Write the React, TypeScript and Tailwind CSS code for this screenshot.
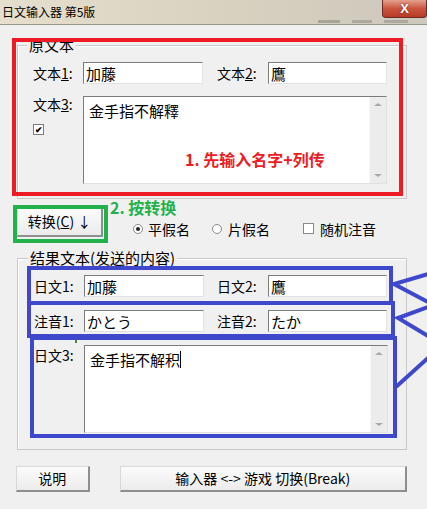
import React from "react";

function Input({ className, text }: { className: string; text: string }) {
  return (
    <div
      className={
        "h-[22px] bg-white border border-t-[#7c7c7c] border-l-[#7c7c7c] border-r-[#e2e2e2] border-b-[#e2e2e2] flex items-center pl-[2px] text-[15px] leading-none " +
        className
      }
    >
      <span>{text}</span>
    </div>
  );
}

function ScrollBar() {
  return (
    <div className="w-[17px] h-full bg-[#ececec] border-l border-[#f7f7f7] flex flex-col justify-between items-center py-[6px]">
      <div className="w-0 h-0 border-l-[4px] border-r-[4px] border-b-[3px] border-l-transparent border-r-transparent border-b-[#a8a8a8]" />
      <div className="w-0 h-0 border-l-[4px] border-r-[4px] border-t-[3px] border-l-transparent border-r-transparent border-t-[#a8a8a8]" />
    </div>
  );
}

function TextArea({ text, caret }: { text: string; caret?: boolean }) {
  return (
    <div className="w-[304px] h-[88px] bg-white border border-t-[#7c7c7c] border-l-[#7c7c7c] border-r-[#e2e2e2] border-b-[#e2e2e2] flex">
      <div className="flex-1 pl-[5px] pt-[5px] text-[15px] leading-[18px] flex items-start">
        <span>{text}</span>
        {caret && <span className="inline-block w-[1px] h-[17px] bg-black" />}
      </div>
      <ScrollBar />
    </div>
  );
}

function Button({ className, children }: { className: string; children: React.ReactNode }) {
  return (
    <div
      className={
        "flex items-center justify-center bg-gradient-to-b from-[#fbfbfb] to-[#ececec] border border-t-[#d8d8d8] border-l-[#d8d8d8] border-r-2 border-b-2 border-r-[#8e8e8e] border-b-[#8e8e8e] text-[14px] " +
        className
      }
    >
      {children}
    </div>
  );
}

function Label({ children, className }: { children: React.ReactNode; className: string }) {
  return <div className={"text-[14px] leading-none " + className}>{children}</div>;
}

export default function App() {
  return (
    <div className="relative w-[427px] h-[509px] overflow-hidden bg-[#f0f0f0] text-black font-['Noto_Sans_CJK_SC','Liberation_Sans',sans-serif]">
      {/* Title bar */}
      <div className="relative h-[25px] bg-gradient-to-r from-[#e6dfce] via-[#d9d2c0] to-[#cdc8bd] border-b border-[#9a968e] flex items-center pl-[2px]">
        <span className="text-[12px] leading-none">日文输入器 第5版</span>
        <div className="absolute left-[318px] top-[20px] flex gap-[12px]">
          <div className="w-[22px] h-[3px] bg-[#8a8880] opacity-60" />
          <div className="w-[20px] h-[3px] bg-[#8a8880] opacity-50" />
          <div className="w-[24px] h-[3px] bg-[#8a8880] opacity-50" />
        </div>
        <div className="absolute right-0 top-0 w-[45px] h-[18px] rounded-b-[4px] border border-t-0 border-[#6d2a22] bg-gradient-to-b from-[#e3a08e] via-[#c9553e] to-[#b83a24] flex items-center justify-center">
          <span className="text-white font-bold text-[13px] leading-none font-['Liberation_Sans',sans-serif] [text-shadow:0_0_2px_#5a1a10]">X</span>
        </div>
      </div>

      {/* Body */}
      <div className="pl-[17px] pr-[20px] flex flex-col">
        {/* Group 1 */}
        <div className="relative mt-[20px] h-[154px] border border-[#c9c9c9] shadow-[inset_1px_1px_0_#ffffff] pt-[16px] pl-[15px]">
          <div className="absolute -top-[10px] left-[9px] bg-[#f0f0f0] px-[2px] text-[15px] leading-[18px]">原文本</div>
          <div className="flex items-center h-[22px]">
            <Label className="w-[50px]">
              文本<span className="underline">1</span>:
            </Label>
            <Input className="w-[120px]" text="加藤" />
            <Label className="w-[51px] ml-[14px]">
              文本<span className="underline">2</span>:
            </Label>
            <Input className="w-[119px]" text="鷹" />
          </div>
          <div className="flex mt-[12px]">
            <div className="w-[50px] flex flex-col">
              <Label className="mt-[1px]">
                文本<span className="underline">3</span>:
              </Label>
              <div className="mt-[13px] w-[11px] h-[11px] bg-white border border-[#7c7c7c] flex items-center justify-center text-[9px] leading-none font-bold">
                ✔
              </div>
            </div>
            <TextArea text="金手指不解釋" />
          </div>
        </div>

        {/* Convert row */}
        <div className="flex items-center mt-[8px] h-[30px]">
          <Button className="w-[86px] h-[30px]">
            <span>
              转换(<span className="underline">C</span>) ↓
            </span>
          </Button>
          <div className="flex items-center mt-[13px] ml-[30px] text-[14px] leading-none">
            <div className="w-[10px] h-[10px] rounded-full bg-white border border-[#8a8a8a] flex items-center justify-center">
              <div className="w-[4px] h-[4px] rounded-full bg-[#222]" />
            </div>
            <span className="ml-[5px]">平假名</span>
            <div className="ml-[22px] w-[10px] h-[10px] rounded-full bg-white border border-[#8a8a8a]" />
            <span className="ml-[6px]">片假名</span>
            <div className="ml-[33px] w-[11px] h-[11px] bg-white border border-[#8a8a8a]" />
            <span className="ml-[6px]">随机注音</span>
          </div>
        </div>

        {/* Group 2 */}
        <div className="relative mt-[21px] h-[192px] border border-[#c9c9c9] shadow-[inset_1px_1px_0_#ffffff] pt-[16px] pl-[16px]">
          <div className="absolute -top-[10px] left-[10px] bg-[#f0f0f0] px-[2px] text-[15px] leading-[18px]">结果文本(发送的内容)</div>
          <div className="flex items-center h-[22px]">
            <Label className="w-[50px]">日文1:</Label>
            <Input className="w-[120px]" text="加藤" />
            <Label className="w-[51px] ml-[13px]">日文2:</Label>
            <Input className="w-[119px]" text="鷹" />
          </div>
          <div className="flex items-center h-[22px] mt-[13px]">
            <Label className="w-[50px]">注音1:</Label>
            <Input className="w-[120px]" text="かとう" />
            <Label className="w-[51px] ml-[13px]">注音2:</Label>
            <Input className="w-[119px]" text="たか" />
          </div>
          <div className="flex mt-[13px]">
            <Label className="w-[50px] mt-[3px]">日文3:</Label>
            <TextArea text="金手指不解积" caret />
          </div>
        </div>

        {/* Bottom buttons */}
        <div className="flex mt-[16px]">
          <Button className="w-[74px] h-[26px] -ml-[1px]">说明</Button>
          <Button className="w-[289px] h-[26px] ml-[30px]">输入器 &lt;-&gt; 游戏 切换(Break)</Button>
        </div>
      </div>

      {/* Annotations */}
      <div className="absolute left-[12px] top-[38px] w-[391px] h-[158px] border-[4px] border-[#ed1c24]" />
      <div className="absolute left-[185px] top-[151px] text-[16px] font-bold text-[#ed1c24] leading-none">1. 先输入名字+列传</div>
      <div className="absolute left-[13px] top-[205px] w-[95px] h-[38px] border-[4px] border-[#22b14c]" />
      <div className="absolute left-[110px] top-[199px] text-[16px] font-bold text-[#22b14c] leading-none">2. 按转换</div>
      <div className="absolute left-[27px] top-[266px] w-[366px] h-[39px] border-[4px] border-[#3f48cc]" />
      <div className="absolute left-[27px] top-[301px] w-[368px] h-[37px] border-[4px] border-[#3f48cc]" />
      <div className="absolute left-[30px] top-[336px] w-[367px] h-[102px] border-[4px] border-[#3f48cc]" />
      <div className="absolute left-[75px] top-[340px] w-[2px] h-[3px] bg-[#4a8a2a]" />
      <svg className="absolute left-0 top-0" width="427" height="509" viewBox="0 0 427 509">
        <g stroke="#3f48cc" strokeWidth="4" fill="none" strokeLinecap="round">
          <polyline points="428,274 394,284 428,302" />
          <polyline points="428,307 398,318 428,336" />
          <line x1="397" y1="386" x2="428" y2="358" />
        </g>
      </svg>
    </div>
  );
}
